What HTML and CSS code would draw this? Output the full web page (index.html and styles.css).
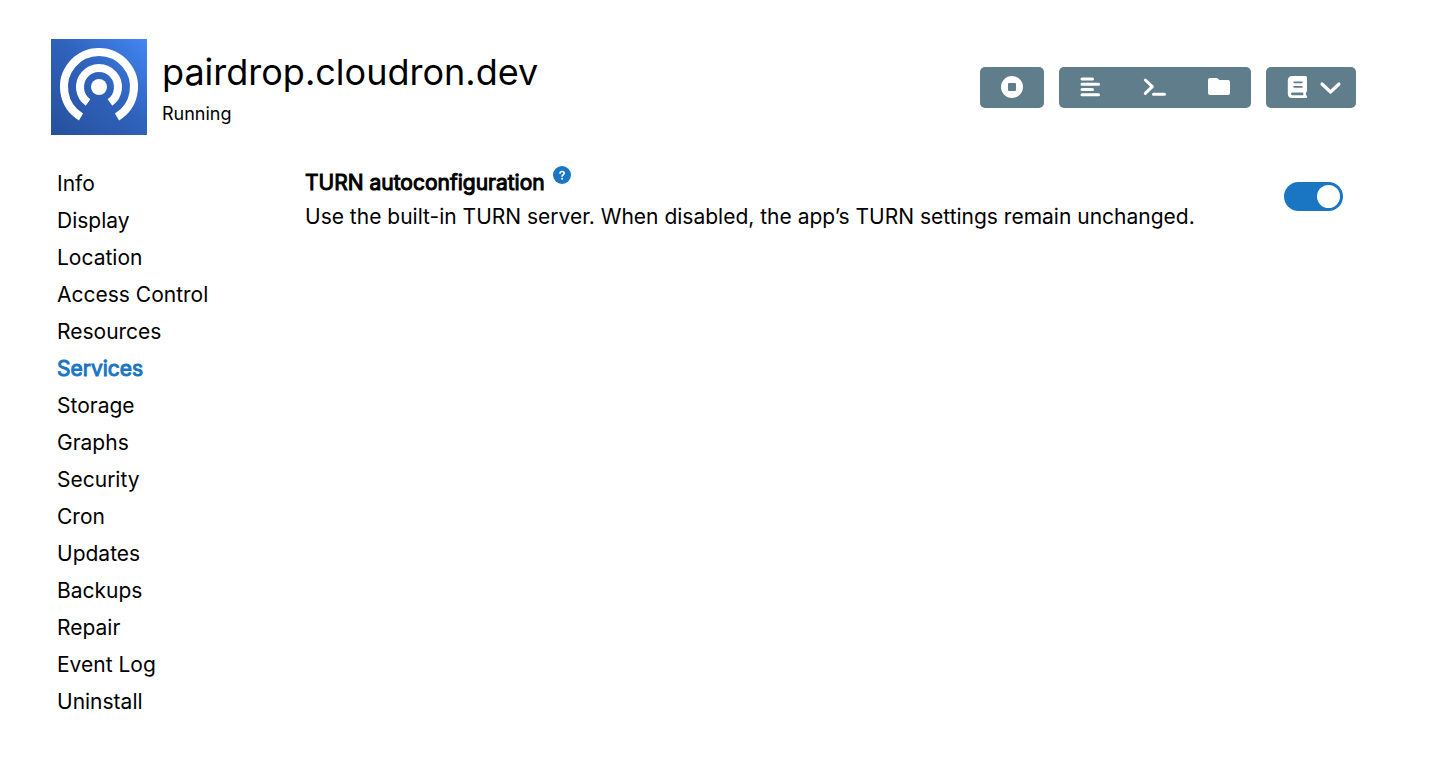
FILE: index.html
```html
<!DOCTYPE html>
<html lang="en">
<head>
<meta charset="utf-8">
<meta name="viewport" content="width=device-width, initial-scale=1">
<title>pairdrop.cloudron.dev</title>
<link rel="stylesheet" href="styles.css">
</head>
<body>
<div class="page">
  <header class="header">
    <svg class="app-icon" viewBox="0 0 96 96" role="img" aria-label="PairDrop">
      <defs>
        <linearGradient id="icon-bg" x1="0" y1="1" x2="1" y2="0">
          <stop offset="0" stop-color="#27509b"/>
          <stop offset="0.55" stop-color="#2f63bd"/>
          <stop offset="1" stop-color="#4386f5"/>
        </linearGradient>
      </defs>
      <rect width="96" height="96" fill="url(#icon-bg)"/>
      <circle cx="48" cy="48" r="8" fill="#fff"/>
      <g fill="none" stroke="#fff" stroke-width="8">
        <path d="M37 63.500A19 19 0 1 1 59 63.500"/>
        <path d="M30 78A35 35 0 1 1 66 78"/>
      </g>
    </svg>
    <div class="heading">
      <h1 class="title">pairdrop.cloudron.dev</h1>
      <div class="status">Running</div>
    </div>
    <div class="toolbar">
      <button class="button" type="button" aria-label="Stop">
        <svg class="icon" viewBox="0 0 24 24"><path fill="currentColor" fill-rule="evenodd" d="M12 1a11 11 0 1 0 0 22a11 11 0 0 0 0-22ZM9 8h6a1 1 0 0 1 1 1v6a1 1 0 0 1-1 1h-6a1 1 0 0 1-1-1v-6A1 1 0 0 1 9 8Z"/></svg>
      </button>
      <div class="button-group">
        <button class="button" type="button" aria-label="Logs">
          <svg class="icon" viewBox="0 0 24 24"><path d="M3 4h10.500M3 9.300h16.500M3 14.500h10.500M3 19.800h16.500" fill="none" stroke="currentColor" stroke-width="3" stroke-linecap="round"/></svg>
        </button>
        <button class="button" type="button" aria-label="Terminal">
          <svg class="icon" viewBox="0 0 24 24"><path d="M2.300 5l7 6.700l-7 6.700M10.500 19.300h11" fill="none" stroke="currentColor" stroke-width="3" stroke-linecap="round" stroke-linejoin="round"/></svg>
        </button>
        <button class="button" type="button" aria-label="File manager">
          <svg class="icon" viewBox="0 0 24 24"><path fill="currentColor" d="M3 3h6.500c1.500 0 2 2 3.500 2h8a2 2 0 0 1 2 2v11a2 2 0 0 1-2 2H3a2 2 0 0 1-2-2V5a2 2 0 0 1 2-2Z"/></svg>
        </button>
      </div>
      <button class="button button-menu" type="button" aria-label="Documentation">
        <svg class="icon" viewBox="0 0 24 24"><path fill="currentColor" fill-rule="evenodd" d="M6 1H19.500a1.500 1.500 0 0 1 1.500 1.500v13.500a1.500 1.500 0 0 1-1 1.400v2.800a1.400 1.400 0 0 1-.3 2.800H6A4.200 4.200 0 0 1 1.800 19V5.200A4.200 4.200 0 0 1 6 1ZM6 17.500a1.400 1.400 0 0 0 0 2.700H17.300v-2.700ZM7.500 6.500v1.800h9V6.500ZM7.500 11v1.800h9V11Z"/></svg>
        <svg class="icon" viewBox="0 0 24 24"><path d="M4 9l8.500 8l8.500-8" fill="none" stroke="currentColor" stroke-width="3.200" stroke-linecap="round" stroke-linejoin="round"/></svg>
      </button>
    </div>
  </header>
  <div class="body">
    <nav class="nav" aria-label="App settings">
      <a class="nav-link" href="#info">Info</a>
      <a class="nav-link" href="#display">Display</a>
      <a class="nav-link" href="#location">Location</a>
      <a class="nav-link" href="#access">Access Control</a>
      <a class="nav-link" href="#resources">Resources</a>
      <a class="nav-link active" href="#services" aria-current="page">Services</a>
      <a class="nav-link" href="#storage">Storage</a>
      <a class="nav-link" href="#graphs">Graphs</a>
      <a class="nav-link" href="#security">Security</a>
      <a class="nav-link" href="#cron">Cron</a>
      <a class="nav-link" href="#updates">Updates</a>
      <a class="nav-link" href="#backups">Backups</a>
      <a class="nav-link" href="#repair">Repair</a>
      <a class="nav-link" href="#eventlog">Event Log</a>
      <a class="nav-link" href="#uninstall">Uninstall</a>
    </nav>
    <main class="setting">
      <div class="setting-text">
        <div class="setting-head">
          <label class="setting-label" for="turn">TURN autoconfiguration</label>
          <a class="help" href="#help" aria-label="Help">
            <svg class="help-icon" viewBox="0 0 18 18"><circle cx="9" cy="9" r="9" fill="currentColor"/><path d="M7 7.200C7 5 11.200 5 11.200 7.300C11.200 8.700 9.100 8.800 9.100 10.300" fill="none" stroke="#fff" stroke-width="1.600" stroke-linecap="round"/><circle cx="9.100" cy="12.800" r="1" fill="#fff"/></svg>
          </a>
        </div>
        <p class="setting-description">Use the built-in TURN server. When disabled, the app’s TURN settings remain unchanged.</p>
      </div>
      <input class="switch" id="turn" type="checkbox" role="switch" checked>
    </main>
  </div>
</div>
</body>
</html>
```
FILE: styles.css
```css
* {
  box-sizing: border-box;
}

body {
  margin: 0;
  background: #fff;
  color: #000;
  font-family: Inter, "Liberation Sans", sans-serif;
  font-size: 21px;
  line-height: 25px;
}

.page {
  padding: 39px 89px 39px 51px;
}

.header {
  display: flex;
  align-items: center;
  gap: 15px;
}

.app-icon {
  flex: none;
  width: 96px;
  height: 96px;
}

.heading {
  flex: 1;
}

.title {
  margin: 0;
  font-size: 36px;
  font-weight: 400;
  line-height: 46px;
}

.status {
  margin-top: 8px;
  font-size: 18px;
  line-height: 22px;
}

.toolbar {
  display: flex;
  gap: 15px;
}

.button-group {
  display: flex;
  border-radius: 5px;
  overflow: hidden;
}

.button {
  display: flex;
  align-items: center;
  justify-content: center;
  gap: 8px;
  min-width: 64px;
  height: 41px;
  padding: 0 20px;
  border: 0;
  border-radius: 5px;
  background: #607d8b;
  color: #fff;
  cursor: pointer;
}

.button-group .button {
  border-radius: 0;
}

.button-menu {
  padding-right: 14px;
}

.icon {
  flex: none;
  width: 24px;
  height: 24px;
}

.body {
  display: flex;
  gap: 48px;
  padding: 30px 13px 0 6px;
}

.nav {
  flex: none;
  display: flex;
  flex-direction: column;
  width: 200px;
}

.nav-link {
  padding: 6px 0;
  color: #000;
  text-decoration: none;
}

.nav-link.active {
  color: #1a76c2;
  -webkit-text-stroke: 1px currentColor;
}

.setting {
  flex: 1;
  display: flex;
  align-items: flex-start;
  justify-content: space-between;
  gap: 24px;
}

.setting-head {
  display: flex;
  gap: 8px;
  padding-top: 5px;
}

.setting-label {
  -webkit-text-stroke: 1px currentColor;
}

.help {
  height: 18px;
  margin-top: -4px;
  color: #1a76c2;
}

.help-icon {
  display: block;
  width: 18px;
  height: 18px;
}

.setting-description {
  margin: 9px 0 0;
}

.switch {
  flex: none;
  appearance: none;
  display: flex;
  align-items: center;
  justify-content: flex-end;
  width: 59px;
  height: 29px;
  margin: 17px 0 0;
  padding: 3px;
  border-radius: 15px;
  background: #1a76c2;
  cursor: pointer;
}

.switch::before {
  content: "";
  width: 23px;
  height: 23px;
  border-radius: 50%;
  background: #fff;
}

.switch:not(:checked) {
  justify-content: flex-start;
  background: #ccc;
}
```
